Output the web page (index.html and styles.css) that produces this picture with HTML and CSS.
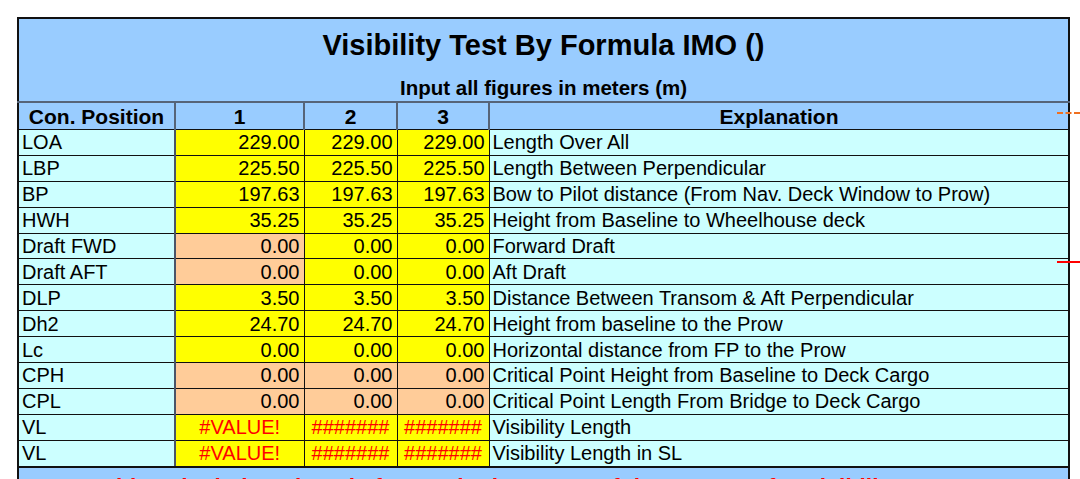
FILE: index.html
```html
<!DOCTYPE html>
<html>
<head>
<meta charset="utf-8">
<link rel="stylesheet" href="styles.css">
</head>
<body>
<div class="sheet">
<table class="grid">
  <colgroup>
    <col class="c-pos"><col class="c-n1"><col class="c-n2"><col class="c-n3"><col class="c-exp">
  </colgroup>
  <tr class="title-row"><td colspan="5" class="title">Visibility Test By Formula IMO ()</td></tr>
  <tr class="sub-row"><td colspan="5" class="subtitle">Input all figures in meters (m)</td></tr>
  <tr class="head">
    <th>Con. Position</th><th>1</th><th>2</th><th>3</th><th>Explanation</th>
  </tr>
  <tr><td class="lbl">LOA</td><td class="num y">229.00</td><td class="num y">229.00</td><td class="num y">229.00</td><td class="exp">Length Over All</td></tr>
  <tr><td class="lbl">LBP</td><td class="num y">225.50</td><td class="num y">225.50</td><td class="num y">225.50</td><td class="exp">Length Between Perpendicular</td></tr>
  <tr><td class="lbl">BP</td><td class="num y">197.63</td><td class="num y">197.63</td><td class="num y">197.63</td><td class="exp">Bow to Pilot distance (From Nav. Deck Window to Prow)</td></tr>
  <tr><td class="lbl">HWH</td><td class="num y">35.25</td><td class="num y">35.25</td><td class="num y">35.25</td><td class="exp">Height from Baseline to Wheelhouse deck</td></tr>
  <tr><td class="lbl">Draft FWD</td><td class="num p">0.00</td><td class="num y">0.00</td><td class="num y">0.00</td><td class="exp">Forward Draft</td></tr>
  <tr><td class="lbl">Draft AFT</td><td class="num p">0.00</td><td class="num y">0.00</td><td class="num y">0.00</td><td class="exp">Aft Draft</td></tr>
  <tr><td class="lbl">DLP</td><td class="num y">3.50</td><td class="num y">3.50</td><td class="num y">3.50</td><td class="exp">Distance Between Transom &amp; Aft Perpendicular</td></tr>
  <tr><td class="lbl">Dh2</td><td class="num y">24.70</td><td class="num y">24.70</td><td class="num y">24.70</td><td class="exp">Height from baseline to the Prow</td></tr>
  <tr><td class="lbl">Lc</td><td class="num y">0.00</td><td class="num y">0.00</td><td class="num y">0.00</td><td class="exp">Horizontal distance from FP to the Prow</td></tr>
  <tr><td class="lbl">CPH</td><td class="num p">0.00</td><td class="num p">0.00</td><td class="num p">0.00</td><td class="exp">Critical Point Height from Baseline to Deck Cargo</td></tr>
  <tr><td class="lbl">CPL</td><td class="num p">0.00</td><td class="num p">0.00</td><td class="num p">0.00</td><td class="exp">Critical Point Length From Bridge to Deck Cargo</td></tr>
  <tr><td class="lbl">VL</td><td class="err y">#VALUE!</td><td class="err y">#######</td><td class="err y">#######</td><td class="exp">Visibility Length</td></tr>
  <tr class="last"><td class="lbl">VL</td><td class="err y">#VALUE!</td><td class="err y">#######</td><td class="err y">#######</td><td class="exp">Visibility Length in SL</td></tr>
  <tr class="note-row"><td colspan="5" class="note">This calculation sheet is for use in the scope of the Program for Visibility test</td></tr>
</table>
<span class="mark mark-dash"></span>
<span class="mark mark-red"></span>
</div>
</body>
</html>
```
FILE: styles.css
```css
html, body {
  margin: 0;
  padding: 0;
  background: #ffffff;
  overflow: hidden;
}
body {
  font-family: "Liberation Sans", Arial, sans-serif;
  color: #000;
}
.sheet {
  position: relative;
  padding: 17px 0 0 17px;
  height: 462px;
}
.grid {
  border-collapse: collapse;
  table-layout: fixed;
  width: 1053px;
  border: 2px solid #111;
}
.c-pos { width: 157px; }
.c-n1 { width: 129px; }
.c-n2 { width: 93px; }
.c-n3 { width: 92px; }
.c-exp { width: 580px; }

.grid td, .grid th {
  padding: 0;
  white-space: nowrap;
  overflow: hidden;
  line-height: 1;
}
.title-row td, .sub-row td {
  background: #99ccff;
  text-align: center;
  font-weight: bold;
  vertical-align: top;
}
.title {
  height: 40px;
  font-size: 29px;
  padding-top: 12px !important;
}
.subtitle {
  height: 23px;
  font-size: 20.5px;
  padding-top: 7px !important;
}
.head th {
  background: #99ccff;
  font-size: 21px;
  font-weight: bold;
  height: 26px;
  border-top: 2px solid #566478;
  border-left: 2px solid #566478;
  border-bottom: 1px solid #111;
  text-align: center;
}
.head th:first-child { border-left: none; }
.grid tr td.lbl, .grid tr td.num, .grid tr td.err, .grid tr td.exp {
  height: 24.9px;
  font-size: 20px;
  border: 1px solid #111;
}
.lbl {
  background: #ccffff;
  padding-left: 3px !important;
  text-align: left;
  border-right: 2px solid #4a5568 !important;
}
.exp {
  background: #ccffff;
  padding-left: 3px !important;
  text-align: left;
}
.num {
  text-align: right;
  padding-right: 4px !important;
}
.err {
  text-align: center;
  color: #ff0000;
}
.y { background: #ffff00; }
.p { background: #ffcc99; }
.grid tr.last td { border-bottom: 2px solid #111; }
.note {
  background: #99ccff;
  height: 40px;
  color: #ff0000;
  font-weight: bold;
  font-size: 23px;
  vertical-align: top;
  padding-top: 9px !important;
  padding-left: 83px !important;
}
.mark {
  position: absolute;
  left: 1057px;
  width: 23px;
  height: 0;
}
.mark-dash {
  top: 112px;
  border-top: 2px dashed #f07020;
}
.mark-red {
  top: 261px;
  border-top: 2px solid #ff0000;
}
```
